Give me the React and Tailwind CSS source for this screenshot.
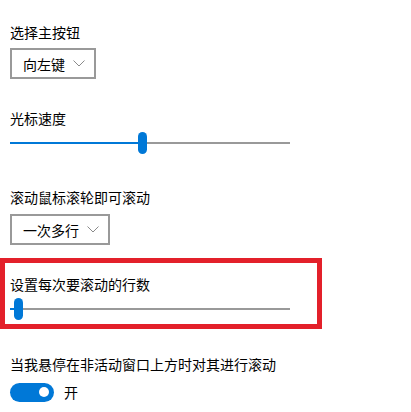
import React from 'react';

const font = { fontFamily: '"Noto Sans CJK SC", "Noto Sans", sans-serif' };

function Chevron() {
  return (
    <svg width="12" height="7" viewBox="0 0 12 7" className="shrink-0">
      <polyline points="0.5,0.5 6,6 11.5,0.5" fill="none" stroke="#8a8a8a" strokeWidth="1" />
    </svg>
  );
}

function Dropdown({ value }) {
  return (
    <div className="inline-flex h-[31px] items-center gap-[8px] border-2 border-[#999999] bg-white pl-[11px] pr-[9px]">
      <span className="text-[14px] leading-[20px] text-black">{value}</span>
      <Chevron />
    </div>
  );
}

function Slider({ pos }) {
  // pos = thumb left offset inside the 280px track
  return (
    <div className="relative flex h-[22px] w-[280px] items-center">
      <div className="flex h-[2px] w-full">
        <div className="h-full bg-[#0078d7]" style={{ width: pos }} />
        <div className="h-full flex-1 bg-[#999999]" />
      </div>
      <div
        className="absolute top-0 h-[22px] w-[9px] rounded-full bg-[#0078d7]"
        style={{ left: pos }}
      />
    </div>
  );
}

function Label({ children }) {
  return <div className="h-[20px] text-[14px] leading-[20px] text-black whitespace-nowrap">{children}</div>;
}

export default function App() {
  return (
    <div className="h-[412px] w-[411px] overflow-hidden bg-white" style={font}>
      <div className="pl-[10px] pt-[22px]">
        <Label>选择主按钮</Label>
        <div className="mt-[6px]">
          <Dropdown value="向左键" />
        </div>

        <div className="mt-[29px]">
          <Label>光标速度</Label>
        </div>
        <div className="mt-[4px]">
          <Slider pos={128} />
        </div>

        <div className="mt-[33px]">
          <Label>滚动鼠标滚轮即可滚动</Label>
        </div>
        <div className="mt-[7px]">
          <Dropdown value="一次多行" />
        </div>
      </div>

      <div className="mt-[13px] w-[322px] border-[5px] border-[#e3202a] pb-[4px] pl-[5px] pt-[11px]">
        <Label>设置每次要滚动的行数</Label>
        <div className="mt-[4px]">
          <Slider pos={4} />
        </div>
      </div>

      <div className="pl-[10px]">
        <div className="mt-[25px]">
          <Label>当我悬停在非活动窗口上方时对其进行滚动</Label>
        </div>
        <div className="mt-[8px] flex items-center">
          <div className="flex h-[19px] w-[44px] items-center justify-end rounded-full bg-[#0078d7] pr-[5px]">
            <div className="h-[10px] w-[10px] rounded-full bg-white" />
          </div>
          <span className="ml-[10px] text-[14px] leading-[20px] text-black">开</span>
        </div>
      </div>
    </div>
  );
}
